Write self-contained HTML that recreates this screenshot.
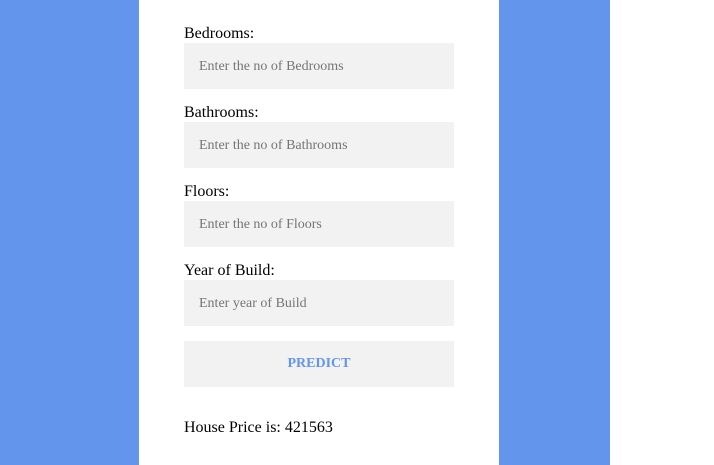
<!DOCTYPE html>
<html><head><meta charset="utf-8"><style>
html,body{margin:0;padding:0;width:714px;height:465px;overflow:hidden;background:#fff;font-family:"Liberation Serif",serif;}
.blue{position:absolute;left:0;top:0;width:610px;height:465px;background:#6495ED;}
.panel{position:absolute;left:139px;top:0;width:360px;height:465px;background:#fff;}
.lbl{position:absolute;left:184px;font-size:16px;color:#000;line-height:18px;}
.inp{position:absolute;left:184px;width:270px;height:46px;background:#f2f2f2;font-size:14px;color:#757575;line-height:48px;box-sizing:border-box;padding-left:15px;}
.btn{position:absolute;left:184px;top:341px;width:270px;height:46px;background:#f2f2f2;color:#6495ED;font-weight:bold;font-size:14px;text-align:center;line-height:46px;}
.res{position:absolute;left:184px;top:419px;font-size:16px;line-height:18px;}
</style></head><body>
<div class="blue"></div><div class="panel"></div>
<div class="lbl" style="top:25px">Bedrooms:</div>
<div class="inp" style="top:43px">Enter the no of Bedrooms</div>
<div class="lbl" style="top:104px">Bathrooms:</div>
<div class="inp" style="top:122px">Enter the no of Bathrooms</div>
<div class="lbl" style="top:183px">Floors:</div>
<div class="inp" style="top:201px">Enter the no of Floors</div>
<div class="lbl" style="top:262px">Year of Build:</div>
<div class="inp" style="top:280px">Enter year of Build</div>
<div class="btn">PREDICT</div>
<div class="res">House Price is: 421563</div>
</body></html>
